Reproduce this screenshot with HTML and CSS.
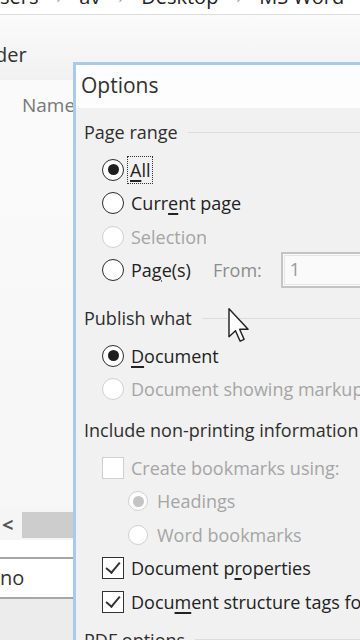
FILE: index.html
```html
<!DOCTYPE html>
<html lang="en">
  <head>
    <meta charset="UTF-8" />
    <meta name="viewport" content="width=device-width, initial-scale=1.0" />
    <title>Options</title>
    <link rel="stylesheet" href="styles.css">
  </head>
  <body>
    <div class="crumbs">
      <div class="crumbs-line">
        <span>sers</span><span class="sep">›</span><span>av</span><span class="sep">›</span><span>Desktop</span><span class="sep">›</span><span>MS Word</span>
      </div>
    </div>

    <div class="explorer">
      <div class="toolbar">der</div>
      <div class="colhead">Name</div>
      <div class="filler"></div>
      <div class="hscroll">
        <span class="arrow">&lt;</span>
        <span class="thumb"></span>
      </div>
      <div class="field">no</div>
      <div class="footer"></div>
    </div>

    <div class="dialog">
      <div class="title">Options</div>
      <div class="body">
        <div class="group-head">Page range</div>
        <div class="group g-range">
          <div class="row"><span class="radio on"></span><span class="focus"><u>A</u>ll</span></div>
          <div class="row"><span class="radio"></span>Curr<u>e</u>nt page</div>
          <div class="row off"><span class="radio"></span>Selection</div>
          <div class="row">
            <span class="radio"></span>Pa<u>g</u>e(s)
            <span class="from">From:</span>
            <span class="input">1</span>
          </div>
        </div>

        <div class="group-head g-head-2">Publish what</div>
        <div class="group">
          <div class="row"><span class="radio on"></span><u>D</u>ocument</div>
          <div class="row off"><span class="radio"></span>Document showing markup</div>
        </div>

        <div class="group-head g-head-3">Include non-printing information</div>
        <div class="group">
          <div class="row off"><span class="check"></span>Create bookmarks using:</div>
          <div class="row off sub"><span class="radio on"></span>Headings</div>
          <div class="row off sub"><span class="radio"></span>Word bookmarks</div>
          <div class="row"><span class="check on"></span>Document p<u>r</u>operties</div>
          <div class="row"><span class="check on"></span>Docu<u>m</u>ent structure tags for accessibility</div>
        </div>

        <div class="group-head g-head-4">PDF options</div>
      </div>
    </div>

    <svg class="cursor" width="22" height="36" viewBox="0 0 12 20">
      <path d="M1 1 L1 16.5 L4.6 13.2 L7.2 19 L9.4 18 L6.9 12.4 L11.6 12.4 Z" fill="#fff" stroke="#222" stroke-width="0.8" stroke-linejoin="round"/>
    </svg>
  </body>
</html>
```

FILE: styles.css
```css
* {
  padding: 0;
  margin: 0;
  box-sizing: border-box;
}
body {
  width: 360px;
  height: 640px;
  overflow: hidden;
  position: relative;
  background-color: #fff;
  color: #262626;
  font-family: "Open Sans", "Noto Sans", sans-serif;
  font-size: 18px;
}
u {
  text-decoration-thickness: 1.5px;
  text-underline-offset: 3px;
}

/* background explorer window */
.crumbs {
  height: 15px;
  overflow: hidden;
  border-bottom: 1px solid #dadada;
  background: #fff;
}
.crumbs-line {
  display: flex;
  gap: 18px;
  margin-top: -14px;
  line-height: 22px;
  font-size: 20px;
  color: #222;
  white-space: nowrap;
}
.crumbs-line .sep {
  color: #999;
  font-size: 16px;
}
.explorer {
  display: flex;
  flex-direction: column;
  height: 625px;
}
.toolbar {
  height: 65px;
  padding-top: 27px;
  line-height: 26px;
  font-size: 20px;
  color: #333;
  margin-left: -5px;
  background: linear-gradient(#fbfbfb, #f1f1f1);
}
.colhead {
  height: 50px;
  padding: 13px 0 0 22px;
  line-height: 24px;
  font-size: 19px;
  color: #777;
  background: #fafafa;
}
.filler {
  height: 380px;
  background: linear-gradient(#fafafa, #f6f6f6);
}
.hscroll {
  height: 30px;
  display: flex;
  align-items: center;
  gap: 9px;
  padding-left: 2px;
  background: #f5f5f5;
}
.hscroll .arrow {
  font-size: 20px;
  font-weight: bold;
  color: #555;
  line-height: 20px;
}
.hscroll .thumb {
  width: 52px;
  height: 26px;
  background: #cdcdcd;
}
.field {
  margin-top: 17px;
  height: 42px;
  border-top: 2px solid #a6a6a6;
  border-bottom: 2px solid #a6a6a6;
  line-height: 38px;
  font-size: 20px;
  color: #333;
  background: #fff;
}
.footer {
  flex: 1;
  background: #ececec;
}

/* options dialog */
.dialog {
  position: absolute;
  left: 73px;
  top: 62px;
  width: 340px;
  height: 640px;
  border: 3px solid #a8cbe9;
  background: #fff;
}
.title {
  height: 43px;
  padding: 6px 0 0 5px;
  line-height: 28px;
  font-size: 21px;
  color: #303030;
  background: #fdfdfd;
}
.body {
  height: 100%;
  padding: 7px 0 0 8px;
  background: #f1f1f1;
  white-space: nowrap;
}
.group-head {
  display: flex;
  align-items: center;
  height: 34px;
  color: #2e2e2e;
}
.group-head::after {
  content: "";
  flex: 1;
  margin-left: 10px;
  border-top: 1px solid #dcdcdc;
}
.g-head-2 {
  margin-top: 14px;
}
.g-head-3 {
  margin-top: 7px;
}
.g-head-4 {
  margin-top: 4px;
}
.group {
  padding-top: 4px;
}
.row {
  display: flex;
  align-items: center;
  height: 33.5px;
  padding-left: 18px;
  color: #222;
}
.row.off {
  color: #a5a5a5;
}
.row.sub {
  padding-left: 44px;
}
.radio {
  width: 22px;
  height: 22px;
  margin-right: 7px;
  border: 1.5px solid #2b2b2b;
  border-radius: 50%;
  background: #fff;
  display: flex;
  align-items: center;
  justify-content: center;
  flex-shrink: 0;
}
.sub .radio {
  width: 20px;
  height: 20px;
  margin-right: 9px;
}
.radio.on::after {
  content: "";
  width: 11px;
  height: 11px;
  border-radius: 50%;
  background: #1e1e1e;
}
.off .radio {
  border-color: #d0d0d0;
}
.off .radio.on::after {
  background: #c4c4c4;
}
.check {
  width: 22px;
  height: 22px;
  margin-right: 7px;
  border: 1.5px solid #333;
  background: #fff;
  flex-shrink: 0;
  position: relative;
}
.off .check {
  border-color: #d0d0d0;
}
.check.on::after {
  content: "";
  position: absolute;
  left: 6px;
  top: 1px;
  width: 6px;
  height: 12px;
  border-right: 2px solid #333;
  border-bottom: 2px solid #333;
  transform: rotate(40deg);
}
.focus {
  line-height: 26px;
  padding: 0 2px;
  margin-left: -3px;
  outline: 1px dotted #333;
}
.from {
  margin-left: 22px;
  color: #8c8c8c;
}
.input {
  margin-left: 19px;
  width: 90px;
  height: 36px;
  padding-left: 7px;
  line-height: 30px;
  border: 2px solid #c4c4c4;
  outline: 1px solid #e6e6e6;
  outline-offset: -4px;
  background: #fafafa;
  color: #999;
}

.cursor {
  position: absolute;
  left: 227px;
  top: 307px;
}
```
